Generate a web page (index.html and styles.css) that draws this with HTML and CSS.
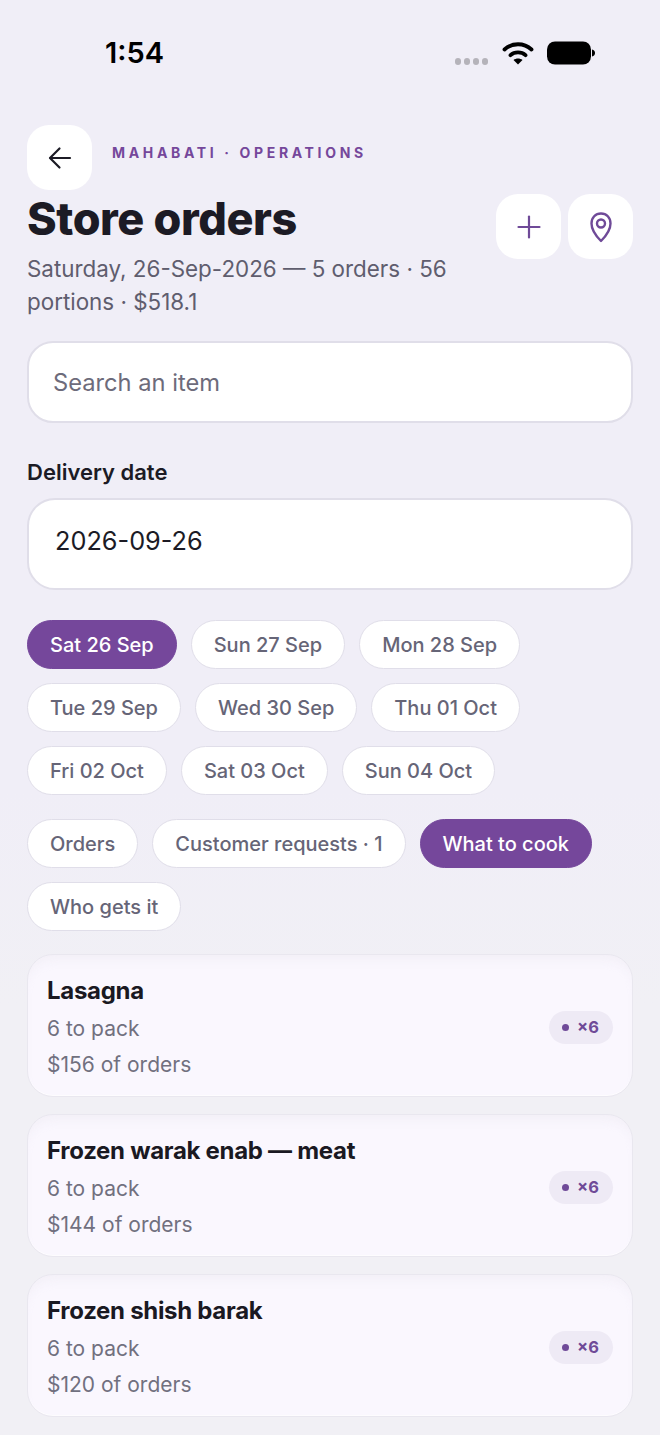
FILE: index.html
```html
<!DOCTYPE html>
<html lang="en">
<head>
    <meta charset="UTF-8">
    <meta name="viewport" content="width=device-width, initial-scale=1.0">
    <title>Store orders</title>
    <link rel="stylesheet" href="styles.css">
</head>
<body>

    <div class="status-bar">
        <span class="clock">1:54</span>
        <div class="status-icons">
            <div class="signal"><i></i><i></i><i></i><i></i></div>
            <svg class="wifi" width="32" height="24" viewBox="0 0 32 24">
                <path d="M2.500 8.500C10 1.500 22 1.500 29.500 8.500" fill="none" stroke="#000" stroke-width="3.8" stroke-linecap="round"/>
                <path d="M8.500 14.200C12.500 10.500 19.500 10.500 23.500 14.200" fill="none" stroke="#000" stroke-width="3.8" stroke-linecap="round"/>
                <path d="M16 23.500L11.500 19C14 17 18 17 20.500 19Z" fill="#000"/>
            </svg>
            <svg class="battery" width="48" height="24" viewBox="0 0 48 24">
                <rect x="0" y="0.500" width="44" height="23" rx="8" fill="#000"/>
                <path d="M45 8.500C47 9 48 10.300 48 12C48 13.700 47 15 45 15.500Z" fill="#000"/>
            </svg>
        </div>
    </div>

    <div class="page">
        <div class="top-row">
            <button class="icon-btn">
                <svg width="28" height="28" viewBox="0 0 28 28" fill="none" stroke="#1c1b25" stroke-width="2.2" stroke-linecap="round" stroke-linejoin="round">
                    <path d="M24 14H4.500"/>
                    <path d="M13.500 4.500L4 14L13.500 23.500"/>
                </svg>
            </button>
            <div class="eyebrow">MAHABATI · OPERATIONS</div>
        </div>

        <div class="title-row">
            <div class="title-text">
                <h1>Store orders</h1>
                <p class="subtitle">Saturday, 26-Sep-2026 — 5 orders · 56 portions · $518.1</p>
            </div>
            <div class="actions">
                <button class="icon-btn">
                    <svg width="26" height="26" viewBox="0 0 26 26" fill="none" stroke="#6f4a98" stroke-width="2.2" stroke-linecap="round">
                        <path d="M13 2.500V23.500"/>
                        <path d="M2.500 13H23.500"/>
                    </svg>
                </button>
                <button class="icon-btn">
                    <svg width="26" height="32" viewBox="0 0 26 32" fill="none" stroke="#6f4a98" stroke-width="2.4" stroke-linejoin="round">
                        <path d="M13 30C9 26 3.500 20 3.500 12.500C3.500 6.500 7.500 2.500 13 2.500C18.500 2.500 22.500 6.500 22.500 12.500C22.500 20 17 26 13 30Z"/>
                        <circle cx="13" cy="12.500" r="4"/>
                    </svg>
                </button>
            </div>
        </div>

        <div class="search">Search an item</div>

        <label class="field-label">Delivery date</label>
        <div class="date-input">2026-09-26</div>

        <div class="chips date-chips">
            <span class="chip active">Sat 26 Sep</span>
            <span class="chip">Sun 27 Sep</span>
            <span class="chip">Mon 28 Sep</span>
            <span class="chip">Tue 29 Sep</span>
            <span class="chip">Wed 30 Sep</span>
            <span class="chip">Thu 01 Oct</span>
            <span class="chip">Fri 02 Oct</span>
            <span class="chip">Sat 03 Oct</span>
            <span class="chip">Sun 04 Oct</span>
        </div>

        <div class="chips tab-chips">
            <span class="chip">Orders</span>
            <span class="chip">Customer requests · 1</span>
            <span class="chip active">What to cook</span>
            <span class="chip">Who gets it</span>
        </div>

        <div class="cards">
            <div class="card">
                <div class="card-text">
                    <h3>Lasagna</h3>
                    <p>6 to pack</p>
                    <p>$156 of orders</p>
                </div>
                <span class="badge"><i></i>×6</span>
            </div>
            <div class="card">
                <div class="card-text">
                    <h3>Frozen warak enab — meat</h3>
                    <p>6 to pack</p>
                    <p>$144 of orders</p>
                </div>
                <span class="badge"><i></i>×6</span>
            </div>
            <div class="card">
                <div class="card-text">
                    <h3>Frozen shish barak</h3>
                    <p>6 to pack</p>
                    <p>$120 of orders</p>
                </div>
                <span class="badge"><i></i>×6</span>
            </div>
        </div>
    </div>

</body>
</html>
```
FILE: styles.css
```css
* {
    box-sizing: border-box;
}

html, body {
    margin: 0;
    padding: 0;
}

body {
    width: 660px;
    height: 1435px;
    overflow: hidden;
    font-family: Inter, "Noto Sans", sans-serif;
    background: linear-gradient(#f0eef7, #f0eef7 55%, #f1f0f5 70%);
    color: #1c1b25;
}

/* status bar */
.status-bar {
    height: 125px;
    padding: 36px 65px 0 105px;
    display: flex;
    justify-content: space-between;
    align-items: flex-start;
}

.clock {
    font-size: 29px;
    line-height: 34px;
    font-weight: 600;
    color: #000;
}

.status-icons {
    display: flex;
    align-items: center;
    height: 34px;
}

.signal {
    display: flex;
    gap: 2.5px;
    margin: 17px 14px 0 0;
}

.signal i {
    width: 6.5px;
    height: 6.5px;
    border-radius: 50%;
    background: #b5b3ba;
}

.wifi {
    margin-right: 13px;
}

/* header */
.page {
    padding: 0 27px;
}

.top-row {
    display: flex;
    gap: 20px;
}

.icon-btn {
    width: 65px;
    height: 65px;
    padding: 0;
    border: none;
    border-radius: 22px;
    background: #fff;
    display: flex;
    align-items: center;
    justify-content: center;
    flex: none;
}

.eyebrow {
    margin-top: 18px;
    font-size: 14px;
    line-height: 20px;
    font-weight: 700;
    letter-spacing: 3.65px;
    color: #75479b;
}

.title-row {
    display: flex;
    justify-content: space-between;
    align-items: flex-start;
    margin-top: 4px;
}

.title-text {
    width: 440px;
}

h1 {
    margin: 0;
    font-size: 45px;
    line-height: 50px;
    font-weight: 800;
    letter-spacing: -0.4px;
    color: #1c1b25;
}

.subtitle {
    margin: 9px 0 0;
    font-size: 22.4px;
    line-height: 32.5px;
    color: #5f5d6e;
}

.actions {
    display: flex;
    gap: 7px;
}

/* inputs */
.search {
    margin-top: 23px;
    height: 82px;
    padding: 0 24px;
    display: flex;
    align-items: center;
    background: #fff;
    border: 2px solid #e0dee9;
    border-radius: 26px;
    font-size: 23.7px;
    color: #6d6b7b;
}

.field-label {
    display: block;
    margin-top: 35px;
    font-size: 22px;
    line-height: 28px;
    font-weight: 600;
    color: #1c1b25;
}

.date-input {
    margin-top: 12px;
    height: 92px;
    padding: 0 26px 7px;
    display: flex;
    align-items: center;
    background: #fff;
    border: 2px solid #e0dee9;
    border-radius: 28px;
    font-size: 25.3px;
    color: #1c1b25;
}

/* chips */
.chips {
    display: flex;
    flex-wrap: wrap;
    gap: 14px;
}

.date-chips {
    margin-top: 30px;
    width: 520px;
}

.tab-chips {
    margin-top: 24px;
}

.chip {
    height: 49px;
    padding: 0 22px;
    display: flex;
    align-items: center;
    background: #fff;
    border: 1.5px solid #e0dee9;
    border-radius: 25px;
    font-size: 20px;
    font-weight: 500;
    color: #666577;
}

.chip.active {
    background: #75479b;
    border-color: #75479b;
    color: #fff;
}

/* cards */
.cards {
    margin-top: 23px;
    display: flex;
    flex-direction: column;
    gap: 17px;
}

.card {
    height: 143px;
    padding: 21px 19px 0;
    display: flex;
    justify-content: space-between;
    background: #faf7fe;
    border: 1px solid #e9e7ef;
    border-radius: 26px;
    box-shadow: inset 0 10px 12px -6px rgba(236, 234, 241, 0.6), inset 0 -1px 0 #fdfcfe;
}

.card-text h3 {
    margin: 0 0 8px;
    font-size: 24px;
    line-height: 30px;
    font-weight: 700;
    letter-spacing: -0.3px;
    color: #1a1922;
}

.card-text p {
    margin: 6px 0 0;
    font-size: 21px;
    line-height: 30px;
    color: #71707f;
}

.badge {
    align-self: center;
    height: 33px;
    margin-top: -18px;
    padding: 0 14px 0 13px;
    display: flex;
    align-items: center;
    gap: 8px;
    border-radius: 17px;
    background: #eeeaf5;
    font-size: 16.5px;
    font-weight: 700;
    color: #6f4a98;
}

.badge i {
    width: 7px;
    height: 7px;
    border-radius: 50%;
    background: #6f4a98;
}
```
